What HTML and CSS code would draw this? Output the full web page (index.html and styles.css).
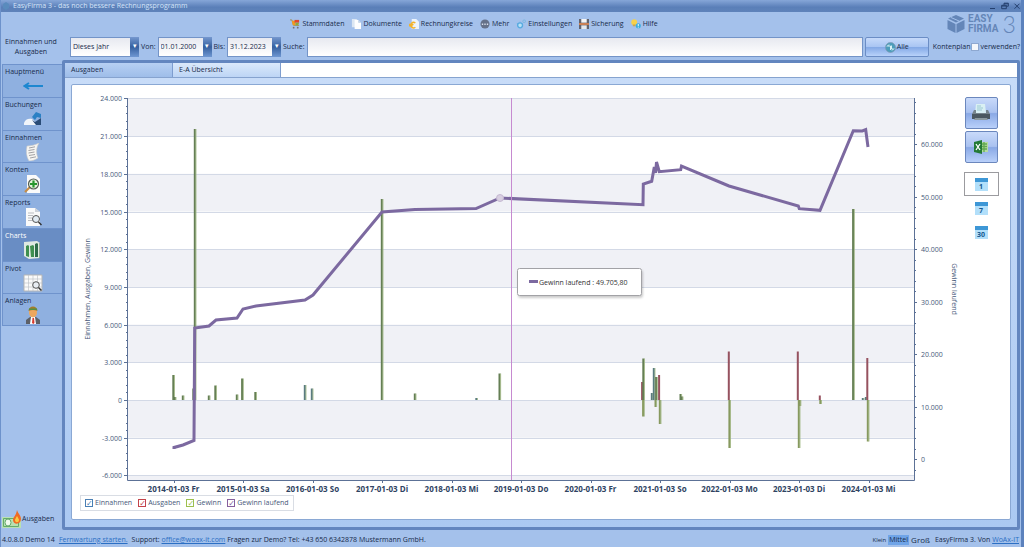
FILE: index.html
```html
<!DOCTYPE html>
<html lang="de">
<head>
<meta charset="utf-8">
<title>EasyFirma 3</title>
<link rel="stylesheet" href="styles.css">
</head>
<body>
<div class="window">
  <header class="titlebar">
    <svg class="app-icon" viewBox="0 0 8 8"><path d="M4 0l3 2v4L4 8 1 6V2z" fill="#5a8bbd"/></svg>
    <span class="title">EasyFirma 3 - das noch bessere Rechnungsprogramm</span>
    <div class="window-buttons">
      <button aria-label="Minimieren"><svg viewBox="0 0 8 8"><path d="M1 6.5h5" /></svg></button>
      <button aria-label="Wiederherstellen"><svg viewBox="0 0 8 8"><path d="M3 3V1.2h4.3v3H5.5M.7 3.3h4.6v3.4H.7zM.7 4h4.6M3 1.8h4.3"/></svg></button>
      <button aria-label="Schließen"><svg viewBox="0 0 8 8"><path d="M1.5 1.7l5 5M6.500 1.7l-5 5"/></svg></button>
    </div>
  </header>

  <div class="menu-row">
    <nav class="menu">
      <button><svg viewBox="0 0 11 11"><path d="M0 1h2l2 6h6" fill="none" stroke="#a08a50"/><path d="M2 2h4v5H3z" fill="#f29a1f"/><path d="M5 1h5v3H5z" fill="#e2452c"/><path d="M6 4h4L9 7H6z" fill="#8fa93b"/><circle cx="4" cy="9.500" r="1" fill="#756d79"/><circle cx="8.500" cy="9.500" r="1" fill="#756d79"/></svg>Stammdaten</button>
      <button><svg viewBox="0 0 11 11"><path d="M1 0h5l2 2v7H1z" fill="#dce7f3"/><path d="M4 1h4l3 3v7H4z" fill="#fdfeff"/><path d="M8 1v3h3z" fill="#b9cee4"/></svg>Dokumente</button>
      <button><svg viewBox="0 0 11 11"><path d="M3 0h5l3 3v8H3z" fill="#edf4fc"/><path d="M7 4.500A3 3 0 1 0 7 9M0 6h5M0 7.500h4" fill="none" stroke="#f3b32b" stroke-width="1.500"/></svg>Rechnungkreise</button>
      <button><svg viewBox="0 0 11 11"><circle cx="5.500" cy="5.500" r="5" fill="#657189"/><path d="M2 5h1.500v1.500H2zM4.750 5h1.500v1.500h-1.500zM7.500 5H9v1.500H7.500z" fill="#d7dfeb"/></svg>Mehr</button>
      <button><svg viewBox="0 0 11 11"><circle cx="4.500" cy="7" r="2.700" fill="#b9e2f7" stroke="#58abe0" stroke-width="1.500" /><circle cx="9" cy="2.500" r="1.500" fill="none" stroke="#77b7df"/><path d="M4.500 3v1M1 5l1 .5" stroke="#58abe0"/></svg>Einstellungen</button>
      <button><svg viewBox="0 0 11 11"><path d="M0 0h11v11H0z" fill="#61636f"/><path d="M2.500 0h6v4h-6z" fill="#f4f5f7"/><path d="M0 4.500h11v2H0z" fill="#d58453"/><path d="M2.500 7h6v4h-6z" fill="#e4e8ee"/></svg>Sicherung</button>
      <button><svg viewBox="0 0 11 11"><circle cx="3.500" cy="3.500" r="3.200" fill="#f7d14a"/><path d="M2 6h3v2H2z" fill="#c9a652"/><circle cx="8" cy="7.500" r="2.800" fill="#38aee2"/><path d="M8 5.500v2.500M8 8.700v.8" stroke="#fff"/></svg>Hilfe</button>
    </nav>
    <div class="logo">
      <svg class="logo-cube" viewBox="0 0 18 20"><path d="M9 1l8 3.500-8 4-8-4z"/><path d="M0.500 6l8 4v9l-8-4z"/><path d="M17.500 6l-8 4v9l8-4z"/><path d="M4 3.500l8 3.500" stroke="#a4c1eb" fill="none"/></svg>
      <span class="logo-name">EASY<br>FIRMA</span><span class="logo-three">3</span>
    </div>
  </div>

  <form class="filters">
    <h1 class="section-title">Einnahmen und Ausgaben</h1>
    <span class="combo combo-period"><select aria-label="Zeitraum"><option>Dieses Jahr</option></select></span>
    <label for="from">Von:</label>
    <span class="combo"><select id="from"><option>01.01.2000</option></select></span>
    <label for="to">Bis:</label>
    <span class="combo"><select id="to"><option>31.12.2023</option></select></span>
    <label for="search">Suche:</label>
    <input class="search" id="search" type="text">
    <button class="all" type="button"><svg viewBox="0 0 11 11"><circle cx="5.500" cy="5.500" r="5" fill="#4c9dbb" stroke="#8199b4" stroke-width=".7"/><path d="M2.500 4h3v4M8.500 7h-2V3.500M2 4.500L4 2.500M9 6.500l-2 2" stroke="#d9f1f5" fill="none"/></svg>Alle</button>
    <label class="plan" for="plan">Kontenplan<input id="plan" type="checkbox">verwenden?</label>
  </form>

  <div class="body">
    <aside class="sidebar">
      <nav class="side-nav">
        <button>Hauptmenü<svg viewBox="0 0 20 18"><path d="M20 9H3M6 6L1.500 9 6 12" fill="none" stroke="#1d87d0" stroke-width="2"/></svg></button>
        <button>Buchungen<svg viewBox="0 0 20 18"><path d="M1 13c1-4 5-5 8-4l4 4v2H1z" fill="#f1f5fa"/><path d="M9 7l4-5 5 2v4l-4-1-2 3z" fill="#2b80c4"/><path d="M9 10l3 2 6-4v7h-5z" fill="#294b76"/></svg></button>
        <button>Einnahmen<svg viewBox="0 0 20 18"><path d="M4 3c4 0 8-1 12-3-3 5-3 10-1 15-3 2-6 3-9 3C3 13 3 8 4 3z" fill="#f6f5f2" stroke="#c9c9c8" stroke-width=".6"/><path d="M6 5l6-1.200M5.500 7.500l6-1M5.500 10l6-1M6 12.500l6-1M7 15l6-1.200" stroke="#8d8d90" stroke-width=".8"/></svg></button>
        <button>Konten<svg viewBox="0 0 20 18"><path d="M4 0h9l4 4v14H4z" fill="#fafafa"/><path d="M2 17l5-5" stroke="#c68c45" stroke-width="2.200"/><circle cx="10.500" cy="9" r="5" fill="#e5f3dc" stroke="#555d55" stroke-width="1.200"/><path d="M10.500 5.500v7M7 9h7" stroke="#27962d" stroke-width="2.200"/></svg></button>
        <button>Reports<svg viewBox="0 0 20 18"><path d="M3 0h9l5 4v14H3z" fill="#fafafa"/><path d="M12 0v4h5" fill="#ccd1d8"/><path d="M5 5h6M5 7.500h5M5 10h4M5 12.500h5" stroke="#babcc0"/><circle cx="13" cy="11" r="3.500" fill="#e2ebf3" stroke="#555"/><path d="M15.500 14l3 3" stroke="#333" stroke-width="1.500"/></svg></button>
        <button class="active">Charts<svg viewBox="0 0 20 18"><path d="M1 1l13-1 3 2v15l-11 1-5-3z" fill="#dfe9e2"/><path d="M3 5l2-1 1 1v11l-3-1zM7 5l3-1 1 1v11H8z" fill="#3f8f4f"/><path d="M12 3l2-1 1 1v13h-3z" fill="#2d6c49"/><path d="M16.500 2v15" stroke="#91ab9c"/></svg></button>
        <button>Pivot<svg viewBox="0 0 20 18"><path d="M1 1h18v16H1z" fill="#fafafa" stroke="#b5b5b5"/><path d="M1 5h18M1 9h18M1 13h18M5.500 1v16M10 1v16M14.500 1v16" stroke="#bfc3c9" stroke-width=".7"/><circle cx="13" cy="11" r="3.300" fill="#e8edf3" stroke="#555"/><path d="M15.500 13.500l3 3" stroke="#333" stroke-width="1.500"/></svg></button>
        <button>Anlagen<svg viewBox="0 0 20 18"><path d="M3 18v-4l4-3h6l4 3v4z" fill="#5d6067"/><path d="M8 11h4l1 7H7z" fill="#fff"/><path d="M9.500 12h1.500l.5 5-1.200 1-1.300-1z" fill="#d63b2e"/><ellipse cx="10" cy="6.500" rx="4" ry="5" fill="#eda75e"/><path d="M5.500 5c0-6 9-6 9 0-3-1.500-6-1.500-9 0z" fill="#a67b27"/><path d="M6 2.500h8v1.500H6z" fill="#549044"/></svg></button>
      </nav>
      <button class="side-bottom"><svg viewBox="0 0 20 18"><path d="M0 7h19v11H0z" fill="#b8e1b2"/><path d="M1.500 8.500h15v8h-15z" fill="none" stroke="#65ab6c"/><ellipse cx="6" cy="12.500" rx="3" ry="3.500" fill="#f0faed" stroke="#65ab6c"/><path d="M15 0c1 4 4 5 4 9 0 6-8 6-8 1 0-3 3-4 4-10z" fill="#f06b24"/><path d="M15 6c1 2 2 3 2 4 0 3-4 3-4 0 0-1 1-2 2-4z" fill="#fac944"/></svg>Ausgaben</button>
    </aside>

    <main class="panel">
      <div class="tabs" role="tablist">
        <button role="tab" aria-selected="false">Ausgaben</button>
        <button role="tab" aria-selected="true">E-A Übersicht</button>
      </div>
      <div class="page">
        <div class="sheet">
          <div class="chart-column">
            <svg class="chart" id="chart" viewBox="72 85 888 410" role="img" aria-label="Einnahmen, Ausgaben, Gewinn"></svg>
            <div class="legend">
              <label class="s-income"><input type="checkbox" checked>Einnahmen</label>
              <label class="s-expense"><input type="checkbox" checked>Ausgaben</label>
              <label class="s-profit"><input type="checkbox" checked>Gewinn</label>
              <label class="s-running"><input type="checkbox" checked>Gewinn laufend</label>
            </div>
          </div>
          <div class="tools">
            <button class="tool" aria-label="Drucken"><svg viewBox="0 0 20 18"><path d="M5 0h9l1 9H4z" fill="#d9f0f3"/><path d="M6 2h4M6 4h6M6 6h5" stroke="#9cc9d2"/><path d="M3 6l-2 4v2h18v-2l-2-4h-2v3H5V6z" fill="#77858c"/><path d="M1 10h18v5H1z" fill="#4b585f"/><path d="M4 14h12l1 2H3z" fill="#8b999e"/></svg></button>
            <button class="tool" aria-label="Excel"><svg viewBox="0 0 20 18"><path d="M8 4h9v10H8z" fill="#b5dba2"/><path d="M9 6h7M9 8.500h7M9 11h7M13 4v10" stroke="#62a950" stroke-width="1.300"/><path d="M3 4l8-2v14l-8-2z" fill="#237a36"/><path d="M5 6l4 6M9 6l-4 6" stroke="#fff" stroke-width="1.300"/></svg></button>
            <div class="ranges">
              <button class="range selected"><span class="day">1</span></button>
              <button class="range"><span class="day">7</span></button>
              <button class="range"><span class="day">30</span></button>
            </div>
          </div>
        </div>
      </div>
    </main>
  </div>

  <footer class="status">
    <span>4.0.8.0 Demo 14</span>
    <a href="#">Fernwartung starten.</a>
    <span>Support: <a href="#">office@woax-it.com</a> Fragen zur Demo? Tel: +43 650 6342878 Mustermann GmbH.</span>
    <div class="sizes">
      <button class="small">Klein</button><button class="medium">Mittel</button><button class="large">Groß</button>
      <span>EasyFirma 3. Von <a href="#">WoAx-IT</a></span>
    </div>
  </footer>
</div>
<script src="chart.js"></script>
</body>
</html>
```
FILE: styles.css
```css
* { box-sizing: border-box; }

body {
  margin: 0;
  background: #a4c1eb;
  color: #172a4a;
  font: 7px/10px "Open Sans", "Noto Sans", sans-serif;
}

button, input, select {
  margin: 0;
  padding: 0;
  border: 0;
  background: none;
  color: inherit;
  font: inherit;
}

a { color: #2b6fc4; }

.window {
  display: flex;
  flex-direction: column;
  min-height: 100vh;
  border-right: 3px solid #5c82bd;
  border-left: 1px solid #6d92cb;
}

/* title bar */
.titlebar {
  display: flex;
  align-items: center;
  gap: 3px;
  height: 12px;
  padding: 0 0 0 1px;
  background: linear-gradient(#86a6d8, #5a7fb8 60%, #5f83ba);
  color: #d5e4f8;
}
.app-icon { width: 8px; height: 8px; }
.title { flex: 1; }
.window-buttons { display: flex; gap: 4px; }
.window-buttons svg {
  display: block;
  width: 8px;
  height: 8px;
  fill: none;
  stroke: #25406f;
}

/* main menu */
.menu-row { display: flex; height: 24px; }
.menu {
  display: flex;
  flex: 1;
  align-items: center;
  justify-content: center;
  gap: 7px;
}
.menu button { display: flex; align-items: center; gap: 2px; }
.menu svg { width: 10px; height: 10px; }
.logo {
  display: flex;
  align-items: center;
  width: 72px;
  margin-right: 2px;
  color: #6486b8;
}
.logo-cube { width: 18px; height: 20px; margin-right: 3px; fill: #6486b8; }
.logo-name { font: bold 10px/10px Roboto, sans-serif; }
.logo-three { margin-left: 4px; font: 300 23px/20px Lato, sans-serif; }

/* filter row */
.filters {
  display: flex;
  align-items: center;
  height: 22px;
  gap: 2px;
  padding-right: 1px;
}
.section-title {
  width: 60px;
  margin: 0 7px 0 0;
  font: inherit;
  text-align: center;
}
.combo { position: relative; width: 54px; height: 20px; }
.combo-period { width: 69px; }
.combo select {
  width: 100%;
  height: 100%;
  padding: 0 10px 0 2px;
  appearance: none;
  border: 1px solid #7394c8;
  background: linear-gradient(#e7e9f0, #fff);
}
.combo::after {
  content: "▾";
  position: absolute;
  top: 0;
  right: 0;
  bottom: 0;
  width: 9px;
  background: linear-gradient(#7598cf, #36609f 50%, #6f97d2);
  color: #fff;
  line-height: 18px;
  text-align: center;
  pointer-events: none;
}
.search {
  flex: 1;
  min-width: 0;
  height: 20px;
  padding: 0 4px;
  border: 1px solid #7394c8;
  background: linear-gradient(#e7e9f0, #fff);
}
.all {
  display: flex;
  align-items: center;
  justify-content: center;
  gap: 1px;
  width: 64px;
  height: 20px;
  border: 1px solid #6b8dc5;
  border-radius: 2px;
  background: linear-gradient(#c6dafa, #a9c5f3 48%, #84a9e6 52%, #b8d2fa);
}
.all svg { width: 11px; height: 11px; }
.plan { display: flex; align-items: center; margin-left: 2px; }
.plan input {
  width: 8px;
  height: 8px;
  margin-right: 2px;
  appearance: none;
  border: 1px solid #8ea8d0;
  background: #f4f7fb;
}

/* work area */
.body { display: flex; flex: 1; padding: 2px 1px 0 0; }
.sidebar {
  display: flex;
  flex-direction: column;
  justify-content: space-between;
  width: 61px;
  padding: 4px 0 2px 1px;
}
.side-nav {
  display: grid;
  grid-template-rows: repeat(8, 1fr);
  height: 262px;
}
.side-nav button {
  display: flex;
  flex-direction: column;
  padding: 2px 2px 0;
  border: 1px solid #6f93cc;
  border-width: 1px 0 0 1px;
  background: #8fb0e0;
  text-align: left;
}
.side-nav button:last-child { border-bottom-width: 1px; }
.side-nav .active { background: #698dc4; color: #fff; }
.side-nav svg { align-self: center; width: 20px; height: 18px; }
.side-bottom { display: flex; align-items: center; }
.side-bottom svg { width: 20px; height: 18px; }

.panel {
  display: flex;
  flex: 1;
  flex-direction: column;
  min-width: 0;
  border: 3px solid #6386bf;
  border-radius: 2px;
  background: #fff;
}
.tabs {
  display: flex;
  height: 15px;
  border-bottom: 1px solid #86a3cf;
  background: #fff;
}
.tabs button {
  width: 108px;
  padding: 0 6px;
  border-right: 1px solid #7e9dcf;
  background: linear-gradient(#b7d0f3, #9ebde9);
  text-align: left;
}
.tabs [aria-selected="true"] { background: linear-gradient(#dbe9fb, #bdd5f5); }
.page {
  flex: 1;
  padding: 6px 6px 7px;
  background: linear-gradient(#c8dcf8, #abc9f2);
}
.sheet {
  display: flex;
  min-height: 100%;
  border: 1px solid #8aa8d4;
  border-radius: 2px;
  background: #fff;
}
.chart-column { flex: 1; min-width: 0; }

/* chart */
.chart { display: block; width: 100%; fill: #47597a; }
.band { fill: #f0f1f6; }
.grid { fill: none; stroke: #d3d9e6; }
.axis { fill: none; stroke: #5c7196; }
.dates { font-size: 8px; font-weight: bold; fill: #2f4362; text-anchor: middle; }
.end { text-anchor: end; }
.middle { text-anchor: middle; }
.bar-green { fill: #657f55; }
.bar-edge { fill: #9fb680; }
.bar-teal { fill: #5a7c80; }
.bar-red { fill: #96525f; }
.bar-profit { fill: #87995f; }
.running { fill: none; stroke: #7c69a0; stroke-width: 3; }
.cursor { stroke: #c68ad0; }
.marker { fill: #d8cfe1; stroke: #c5b8d2; }
.tip {
  fill: #fff;
  stroke: #a2a2a6;
  filter: drop-shadow(1px 2px 1px #0003);
}
.tip-key { fill: #7c69a0; }
.tip-text { fill: #333; }

.legend {
  display: flex;
  gap: 6px;
  width: max-content;
  margin: 0 0 8px 8px;
  padding: 2px 4px;
  border: 1px solid #d9dde4;
  color: #47597a;
}
.legend label { display: flex; align-items: center; gap: 2px; }
.legend input {
  display: grid;
  place-items: center;
  width: 8px;
  height: 8px;
  appearance: none;
  border: 1px solid currentColor;
}
.legend input:checked::after { content: "✓"; font: bold 8px/8px "DejaVu Sans", sans-serif; }
.s-income input { color: #4a7fb4; }
.s-expense input { color: #c3434a; }
.s-profit input { color: #9cc04e; }
.s-running input { color: #865f9d; }

/* chart tools */
.tools {
  display: flex;
  flex-direction: column;
  align-items: center;
  gap: 2px;
  width: 50px;
  padding: 12px 8px 0 0;
}
.tool {
  display: grid;
  place-items: center;
  width: 33px;
  height: 32px;
  border: 1px solid #6b87bd;
  border-radius: 2px;
  background: linear-gradient(#c9dafa, #aac2f0 48%, #8aa9e5 52%, #b9d0fa);
}
.tool svg { width: 20px; height: 18px; }
.ranges { display: grid; margin-top: 7px; }
.range {
  display: grid;
  place-items: center;
  width: 35px;
  height: 24px;
}
.selected { border: 1px solid #9b9b9f; }
.day {
  width: 13px;
  height: 13px;
  border-top: 4px solid #3d97d6;
  background: #b2dffa;
  color: #14588f;
  font-weight: bold;
  line-height: 9px;
}

/* status bar */
.status {
  display: flex;
  align-items: center;
  gap: 4px;
  height: 18px;
  padding: 2px 2px 0 1px;
  border-bottom: 1px solid #6d92cb;
}
.sizes { display: flex; align-items: center; gap: 2px; margin-left: auto; }
.sizes span { margin-left: 3px; }
.small { font-size: 6px; }
.medium { padding: 0 1px; background: #6fa4e8; font-size: 7px; }
.large { font-size: 8px; }
```
FILE: chart.js
```js
const parts = [];
const rect = (cls, x, y, w, h) =>
  parts.push(`<rect class="${cls}" x="${x}" y="${y}" width="${w}" height="${h}"/>`);
const text = (cls, x, y, value) =>
  parts.push(`<text class="${cls}" x="${x}" y="${y}">${value}</text>`);
const format = n => n.toLocaleString("de-DE");

const plot = { left: 127, right: 914, top: 98, bottom: 480 };
const zero = 400;
const step = 37.7;

// bands, grid lines and the left scale
let grid = "";
let ticks = "";
for (let i = -2; i <= 8; i++) {
  const y = zero - i * step;
  if (i % 2 === 0 && i > -2) rect("band", plot.left, y, plot.right - plot.left, i < 8 ? step : step);
  if (i === -2) rect("band", plot.left, y, plot.right - plot.left, plot.bottom - y);
  grid += `M${plot.left} ${Math.round(y) + .5}H${plot.right}`;
  ticks += `M${plot.left - 3} ${Math.round(y) + .5}h3`;
  for (let m = 1; m < 5 && i < 8; m++) {
    ticks += `M${plot.left - 1} ${Math.round(y - m * step / 5) + .5}h1`;
  }
  text("end", 122, y + 3, format(i * 3000));
}
parts.push(`<path class="grid" d="${grid}"/>`);

// right scale
for (let i = -1; i <= 34; i++) {
  const y = 459 - i * 10.5;
  const major = i % 5 === 0;
  if (y > plot.top) ticks += `M${plot.right} ${Math.round(y) + .5}h${major ? 3 : 2}`;
  if (major && i <= 30) text("", 921, y + 3, format(i * 2000));
}

// dates
const days = ["Fr", "Sa", "So", "Di", "Mi", "Do", "Fr", "So", "Mo", "Di", "Mi"];
days.forEach((day, i) => {
  const x = 173.5 + i * 69.5;
  for (let m = -3; m < 3; m++) {
    const tx = Math.round(x + m * 13.9) + .5;
    if (tx < plot.right) ticks += `M${tx} ${plot.bottom}v${m === 0 ? 3 : 1}`;
  }
  text("dates", x, 492, `${2014 + i}-01-03 ${day}`);
});
parts.push(`<path class="axis" d="M127.500 98V480.500H914.500V98${ticks}"/>`);

// bars: kind, centre, top, bottom
const bars = [
  ["green", 173.500, 375, 400], ["green", 175, 397, 400], ["green", 183, 395.500, 400],
  ["green", 193.500, 388.500, 400], ["green", 195, 129, 400], ["green", 209, 395.500, 400],
  ["green", 215.500, 385.500, 400], ["green", 237, 394.500, 400], ["green", 242.300, 378.500, 400],
  ["green", 255.500, 392, 400], ["teal", 305, 385, 400], ["teal", 312, 388.500, 400],
  ["green", 382, 199, 400], ["green", 415, 393.500, 400], ["teal", 476.500, 398, 400],
  ["green", 499.700, 373.500, 400], ["red", 642.300, 382, 400], ["green", 643.500, 358.500, 400],
  ["profit", 643.300, 400, 416.500], ["teal", 652, 393, 400], ["teal", 654, 368, 400],
  ["green", 656.300, 377, 400], ["profit", 655.700, 400, 407], ["red", 659.300, 375, 400],
  ["profit", 660, 400, 424], ["green", 680.700, 394, 400], ["green", 682, 396.500, 400],
  ["red", 729, 351.500, 400], ["profit", 729.600, 400, 448], ["red", 798, 351.500, 400],
  ["profit", 799, 400, 448], ["profit", 799.900, 400, 406], ["red", 820, 395.500, 400],
  ["profit", 820.500, 400, 404], ["green", 853.300, 209, 400], ["teal", 863, 398, 400],
  ["teal", 866, 397, 400], ["red", 867.500, 358, 400], ["profit", 868, 400, 441.500]
];
for (const [kind, x, top, bottom] of bars) {
  rect("bar-" + kind, x - 1.2, top, 2, bottom - top);
  if (kind !== "red") rect("bar-edge", x + .6, top, .8, bottom - top);
}

parts.push('<polyline class="running" points="174,449 174,447.500 183,445 194,440.500 194.700,328 209,326 216,320 237,318 243,309 256,306 305,300 313,295 382,212 415,209.500 476,208.500 500,198 643,204.700 643.300,184 651.700,181.300 654.300,167 655.600,173 656.500,162 659.300,171.700 680.700,169.700 681.500,166 729,186 798.300,206 799.300,208.700 820,210.300 853.300,130.700 862.300,131 865.700,129.700 868,147"/>');
parts.push('<circle class="marker" cx="500" cy="198" r="3.500"/>');
parts.push('<path class="cursor" d="M511.500 98V480"/>');

parts.push('<text class="middle" transform="translate(90 289) rotate(-90)">Einnahmen, Ausgaben, Gewinn</text>');
parts.push('<text class="middle" transform="translate(952 289) rotate(90)">Gewinn laufend</text>');

parts.push('<rect class="tip" x="517.500" y="268.500" width="124" height="27" rx="2"/>');
rect("tip-key", 529, 280, 9, 3);
text("tip-text", 539, 285, "Gewinn laufend : 49.705,80");

document.getElementById("chart").innerHTML = parts.join("");
```
